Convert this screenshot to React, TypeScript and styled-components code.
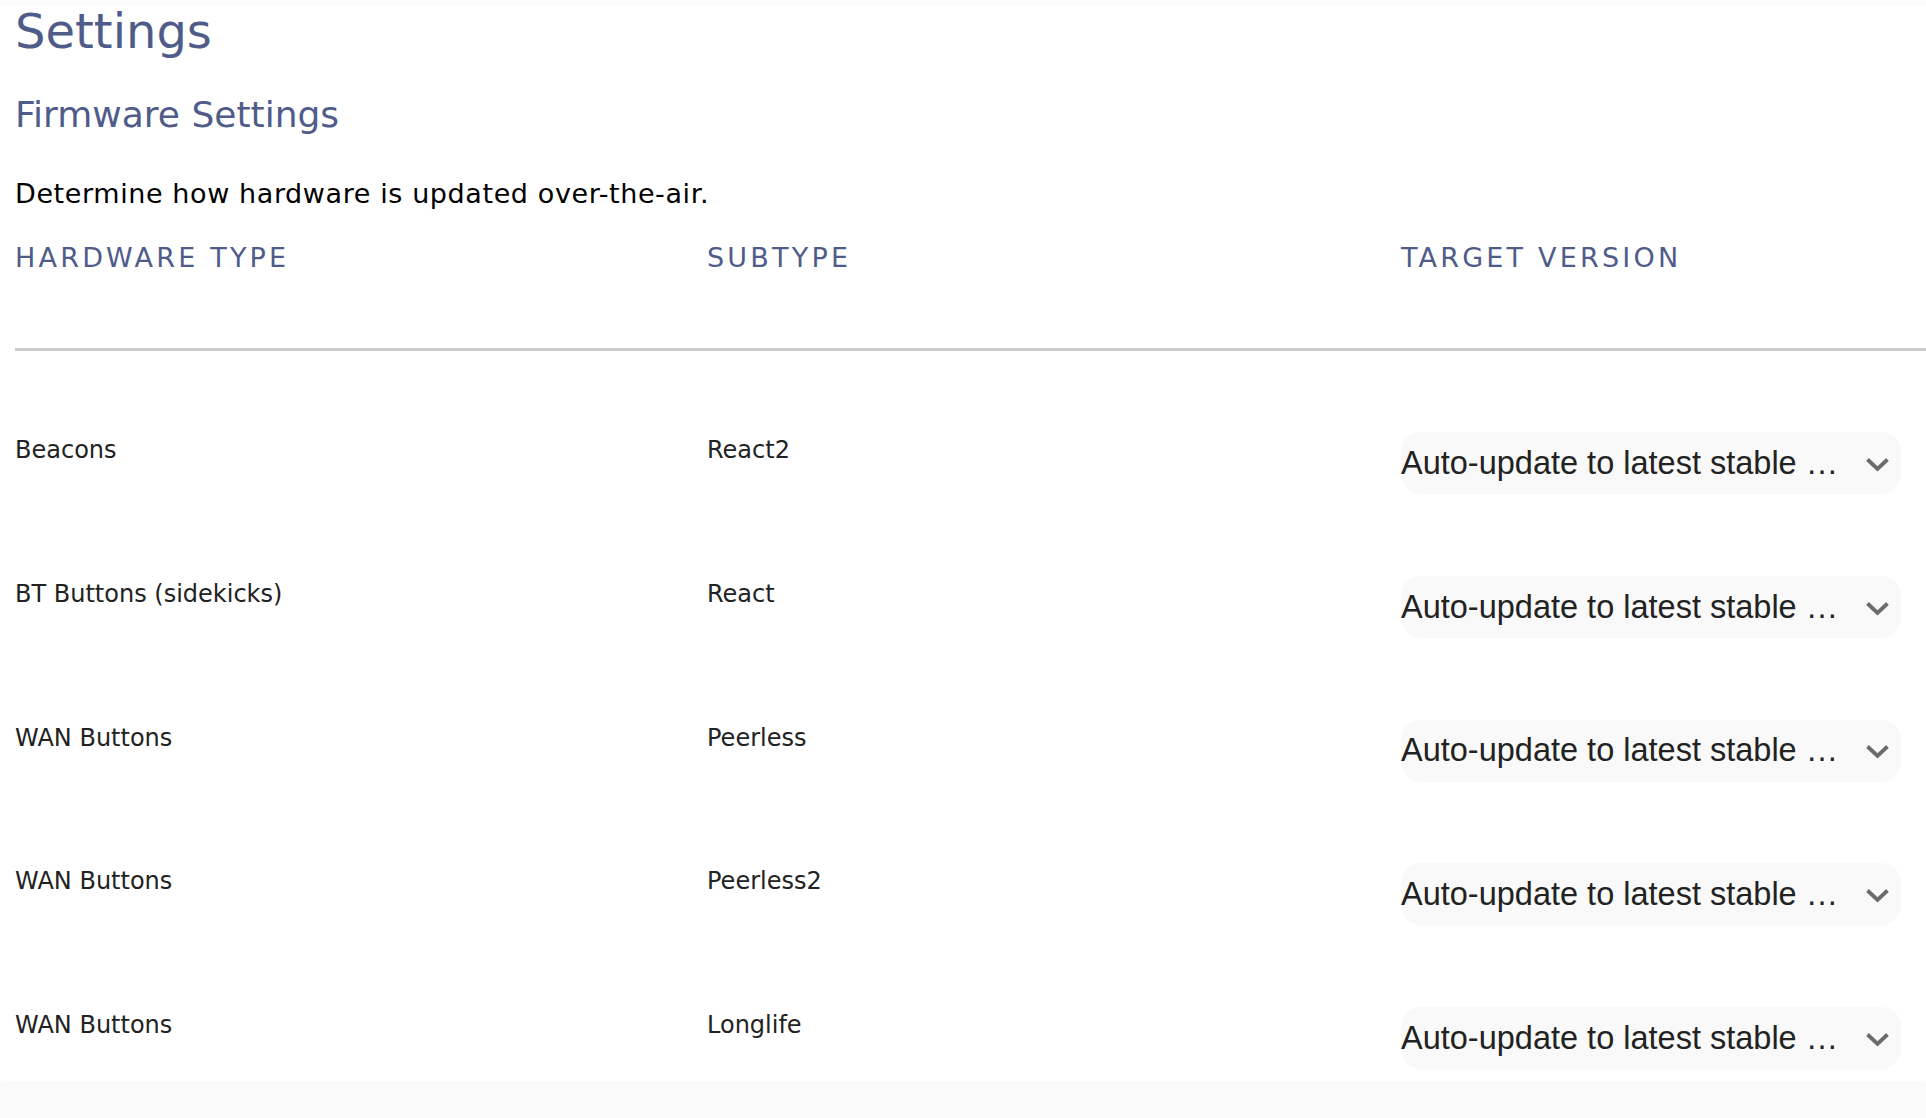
import styled, { createGlobalStyle } from "styled-components";

const GlobalStyle = createGlobalStyle`
  html, body {
    margin: 0;
    padding: 0;
    background: #fbfbfb;
  }
  body {
    font-family: "DejaVu Sans", "Noto Sans", sans-serif;
    -webkit-font-smoothing: antialiased;
  }
`

const rows = [
    { type: "Beacons", subtype: "React2" },
    { type: "BT Buttons (sidekicks)", subtype: "React" },
    { type: "WAN Buttons", subtype: "Peerless" },
    { type: "WAN Buttons", subtype: "Peerless2" },
    { type: "WAN Buttons", subtype: "Longlife" },
]

function App() {
    return (
        <>
            <GlobalStyle />
            <Page>
                <Main>
                    <Title>Settings</Title>
                    <SubTitle>Firmware Settings</SubTitle>
                    <Description>Determine how hardware is updated over-the-air.</Description>
                    <HeadRow>
                        <HeadCell>Hardware Type</HeadCell>
                        <HeadCell>Subtype</HeadCell>
                        <HeadCell>Target Version</HeadCell>
                    </HeadRow>
                    <Divider />
                    <Rows>
                        {rows.map((row, i) => (
                            <Row key={i}>
                                <Cell>{row.type}</Cell>
                                <Cell>{row.subtype}</Cell>
                                <Select>
                                    <SelectText>Auto-update to latest stable …</SelectText>
                                    <svg width="25" height="15" viewBox="0 0 25 15">
                                        <polyline
                                            points="2.5,2.5 12.5,12 22.5,2.5"
                                            fill="none"
                                            stroke="#6c6c6c"
                                            strokeWidth="3.8"
                                        />
                                    </svg>
                                </Select>
                            </Row>
                        ))}
                    </Rows>
                </Main>
            </Page>
        </>
    )
}

const Page = styled.div`
  min-height: 1118px;
  padding-top: 6px;
  box-sizing: border-box;
`

const Main = styled.main`
  background: #fff;
  padding: 1px 26px 13px 15px;
  box-shadow: 0 6px 12px rgba(0, 0, 0, 0.01);
`

const Title = styled.h1`
  margin: 0;
  font-size: 48px;
  line-height: 48px;
  font-weight: 400;
  color: #4f5c8a;
`

const SubTitle = styled.h2`
  margin: 42px 0 0;
  font-size: 36px;
  line-height: 36px;
  font-weight: 400;
  color: #4f5c8a;
`

const Description = styled.p`
  margin: 46.5px 0 0;
  font-size: 27px;
  line-height: 27px;
  letter-spacing: 0.6px;
  color: #000;
`

const columns = `692px 694px 500px`

const HeadRow = styled.div`
  display: grid;
  grid-template-columns: ${columns};
  margin-top: 37.3px;
  padding-bottom: 76.8px;
`

const HeadCell = styled.div`
  font-size: 27px;
  line-height: 27px;
  letter-spacing: 3.2px;
  text-transform: uppercase;
  color: #4f5c8a;
`

const Divider = styled.div`
  height: 3px;
  margin-right: -26px;
  background: #cccccc;
`

const Rows = styled.div`
  display: flex;
  flex-direction: column;
  gap: 81.7px;
  padding-top: 81.8px;
`

const Row = styled.div`
  display: grid;
  grid-template-columns: ${columns};
  align-items: start;
  height: 62px;
`

const Cell = styled.div`
  padding-top: 5.9px;
  font-size: 24px;
  line-height: 24px;
  color: #222;
`

const Select = styled.div`
  display: flex;
  align-items: center;
  justify-content: space-between;
  height: 62px;
  padding-right: 11px;
  border-radius: 20px;
  background: #f9f9f9;
  box-sizing: border-box;
  svg {
    flex-shrink: 0;
    margin-top: 2px;
  }
`

const SelectText = styled.span`
  white-space: nowrap;
  font-family: "Liberation Sans", Arial, sans-serif;
  font-size: 32.5px;
  color: #222;
`

export default App
